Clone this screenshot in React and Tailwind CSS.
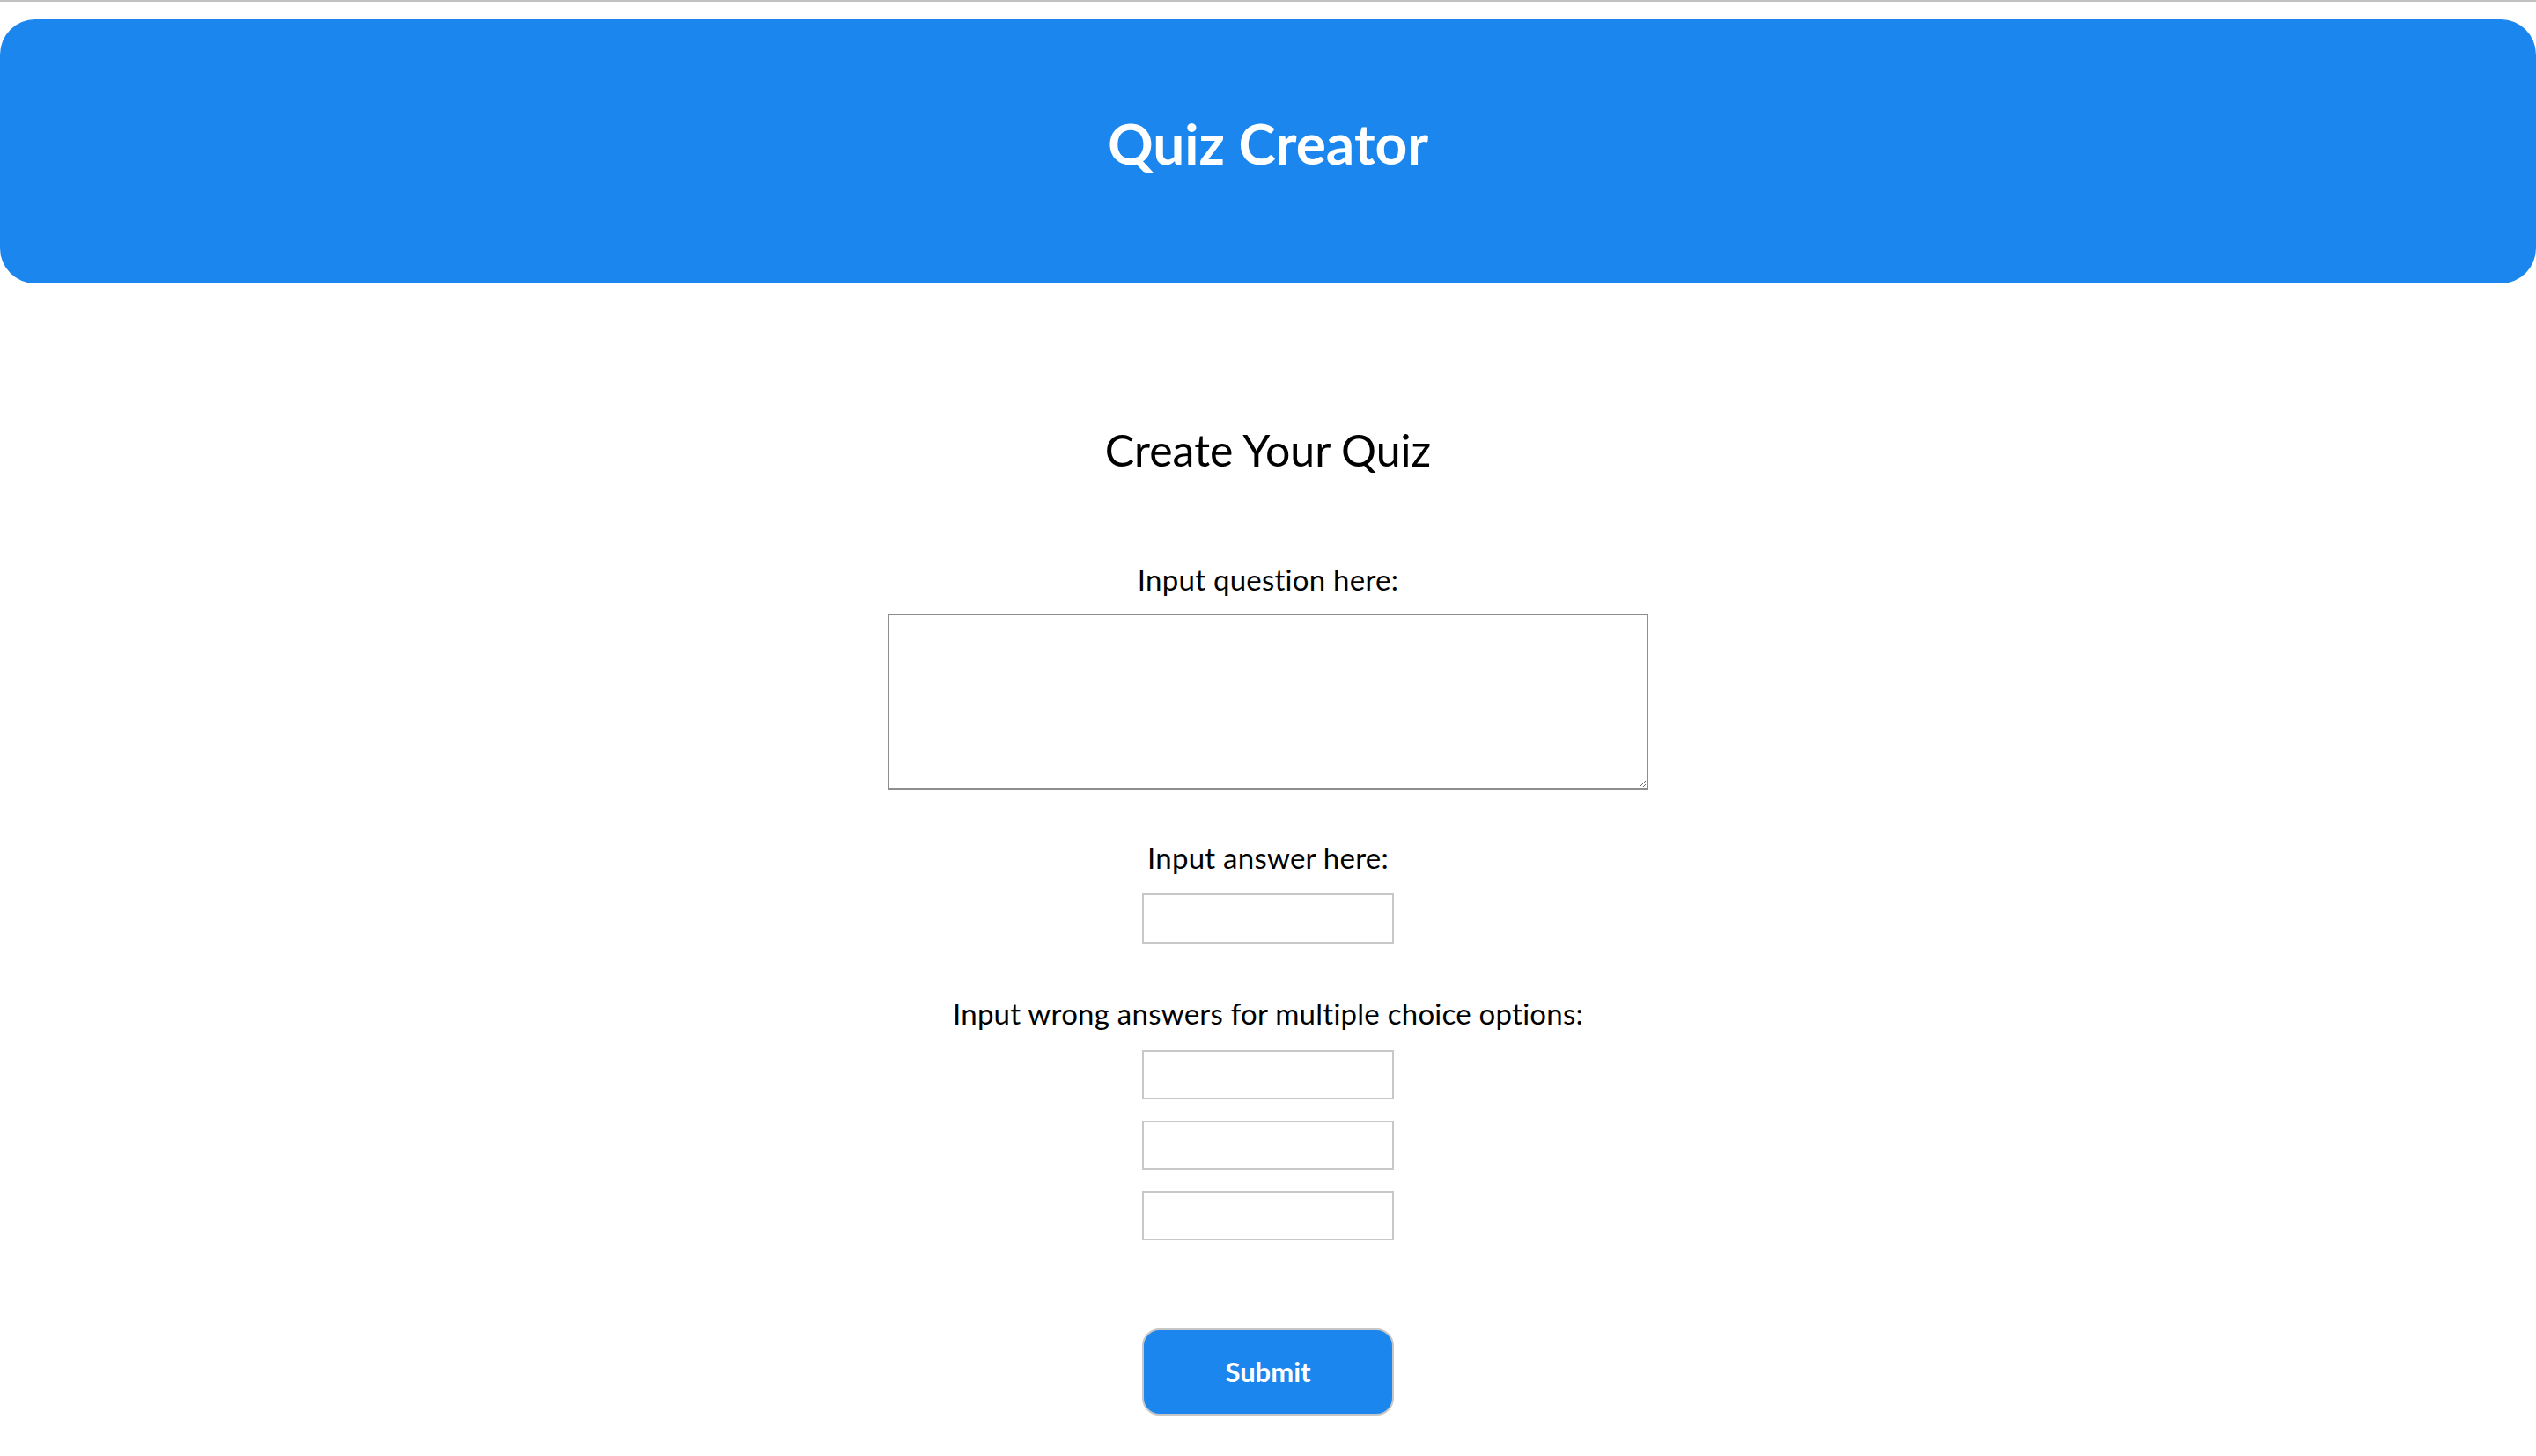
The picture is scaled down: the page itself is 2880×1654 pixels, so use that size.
import React, { useState } from "react";

export default function App() {
  const [question, setQuestion] = useState("");
  const [answer, setAnswer] = useState("");
  const [wrong, setWrong] = useState(["", "", ""]);

  const updateWrong = (i, value) => {
    setWrong((prev) => prev.map((w, idx) => (idx === i ? value : w)));
  };

  return (
    <div className="min-h-screen bg-white font-['Lato','Noto_Sans',sans-serif] text-black">
      {/* top rule */}
      <div className="h-[2px] bg-[#c0c0c0]"></div>

      {/* Header */}
      <header className="mt-[20px] h-[300px] rounded-[40px] bg-[#1b86ee] pt-[109px]">
        <h1 className="text-center text-[64px] leading-none font-bold text-white">
          Quiz Creator
        </h1>
      </header>

      {/* Form */}
      <main className="flex flex-col items-center pb-[47px]">
        <h2 className="mt-[164px] text-[50px] leading-none font-normal">
          Create Your Quiz
        </h2>

        {/* Question */}
        <label className="mt-[106px] text-[33px] tracking-[0.25px] leading-none">
          Input question here:
        </label>
        <textarea
          value={question}
          onChange={(e) => setQuestion(e.target.value)}
          className="mt-[22px] w-[864px] h-[200px] border-2 border-[#8e8e8e] bg-white outline-none text-[28px] p-2"
        ></textarea>

        {/* Answer */}
        <label className="mt-[61px] text-[33px] tracking-[0.25px] leading-none">
          Input answer here:
        </label>
        <input
          type="text"
          value={answer}
          onChange={(e) => setAnswer(e.target.value)}
          className="mt-[24px] w-[286px] h-[57px] border-2 border-[#c8c8c8] bg-white outline-none text-[28px] px-2"
        />

        {/* Wrong answers */}
        <label className="mt-[63px] text-[33px] tracking-[0.25px] leading-none">
          Input wrong answers for multiple choice options:
        </label>
        <div className="mt-[25px] flex flex-col gap-[24px]">
          {wrong.map((w, i) => (
            <input
              key={i}
              type="text"
              value={w}
              onChange={(e) => updateWrong(i, e.target.value)}
              className="w-[286px] h-[56px] border-2 border-[#c8c8c8] bg-white outline-none text-[28px] px-2"
            />
          ))}
        </div>

        <button
          type="button"
          className="mt-[100px] w-[286px] h-[99px] rounded-[20px] border-2 border-[#c6c6c6] bg-[#1b86ee] text-white text-[31px] font-bold"
        >
          Submit
        </button>
      </main>
    </div>
  );
}
